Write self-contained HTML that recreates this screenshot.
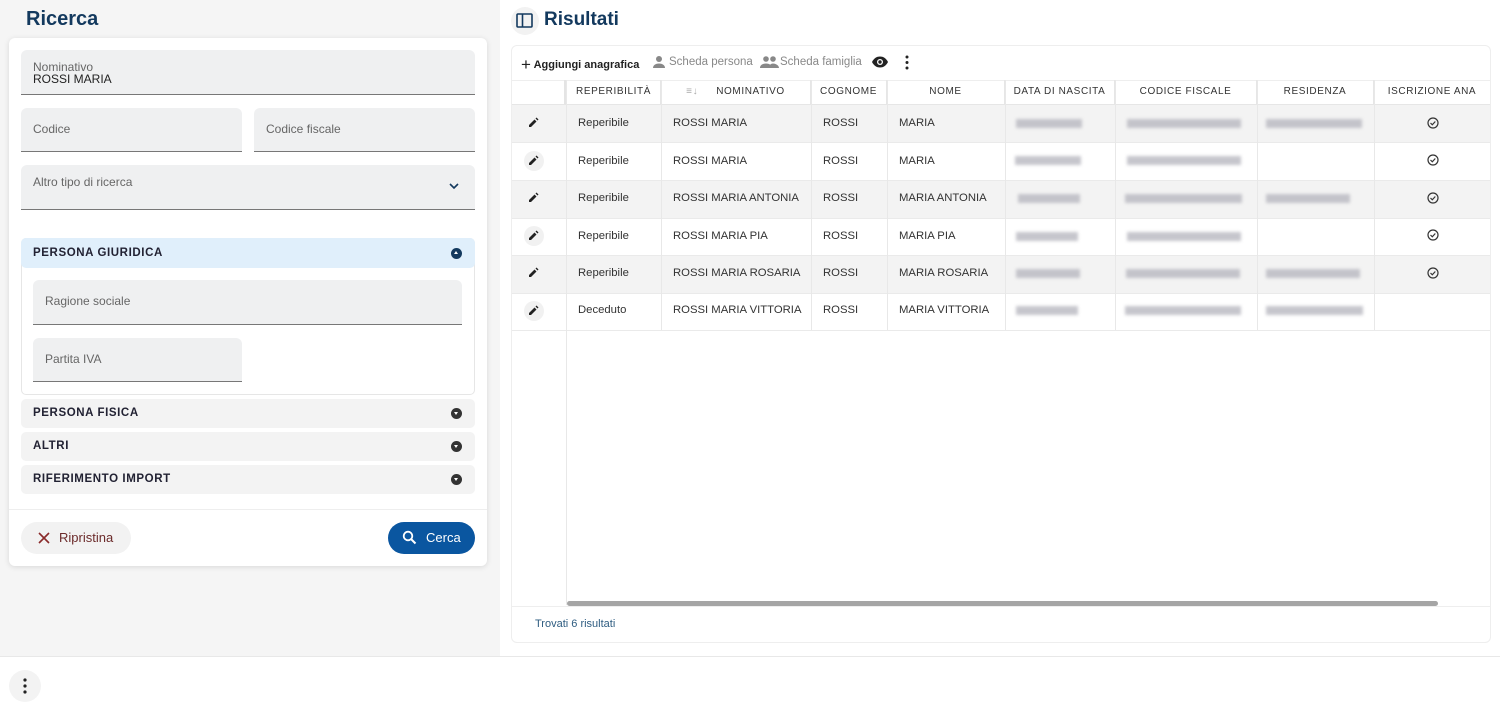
<!DOCTYPE html>
<html><head><meta charset="utf-8"><style>
*{box-sizing:border-box;margin:0;padding:0}
body{width:1500px;height:711px;font-family:"Liberation Sans",sans-serif;background:#fff;position:relative;overflow:hidden;color:#222}
.abs{position:absolute}
.left{left:0;top:0;width:500px;height:656px;background:#f5f5f5}
.card{left:9px;top:38px;width:478px;height:528px;background:#fff;border-radius:6px;box-shadow:0 1px 6px rgba(0,0,0,.12)}
.field{position:absolute;background:#eff0f1;border-radius:6px 6px 0 0;border-bottom:1px solid #777}
.field span{position:absolute;left:12px;font-size:12px;color:#666}
.acc{position:absolute;left:21px;width:454px;height:29px;background:#f3f3f3;border-radius:5px;font-size:11.5px;font-weight:bold;letter-spacing:.6px;color:#223;padding:8px 12px}
.dot{position:absolute;right:13px;top:9px;width:11px;height:11px;border-radius:50%;background:#333}
.dot:after{content:"";position:absolute;left:3px;top:4px;border-left:2.5px solid transparent;border-right:2.5px solid transparent;border-top:3px solid #fff}
.dot.up:after{border-top:none;border-bottom:3px solid #fff;top:3px}
.tcard{left:511px;top:45px;width:980px;height:598px;border:1px solid #eee;border-radius:6px;background:#fff}
.th{position:absolute;top:80px;height:25px;font-size:10px;letter-spacing:.6px;color:#333;text-align:center;line-height:24px;border-right:1px solid #e6e6e6;border-bottom:1px solid #e6e6e6}
.row{position:absolute;left:512px;width:978px;height:38px;border-bottom:1px solid #eaeaea}
.cell{position:absolute;font-size:11.3px;color:#333;line-height:37px}
.blur{position:absolute;height:9px;background:#b8b8c0;filter:blur(1.5px);opacity:.8}
.vl{position:absolute;top:80px;width:1px;height:250px;background:#e8e8e8}
</style></head><body>
<div class="abs left"></div>
<div class="abs" style="left:26px;top:8px;font-size:20px;color:#13395e;font-weight:bold">Ricerca</div>
<div class="abs card"></div>
<div class="field" style="left:21px;top:50px;width:454px;height:45px"><span style="top:10px">Nominativo</span><span style="top:22px;color:#222">ROSSI MARIA</span></div>
<div class="field" style="left:21px;top:108px;width:221px;height:44px"><span style="top:14px">Codice</span></div>
<div class="field" style="left:254px;top:108px;width:221px;height:44px"><span style="top:14px">Codice fiscale</span></div>
<div class="field" style="left:21px;top:165px;width:454px;height:45px"><span style="top:10px">Altro tipo di ricerca</span>
<svg style="position:absolute;right:15px;top:16px" width="12" height="10" viewBox="0 0 12 10"><path d="M2 3l4 4 4-4" stroke="#13395e" stroke-width="1.6" fill="none"/></svg></div>
<div class="abs" style="left:21px;top:238px;width:454px;height:157px;border:1px solid #e6e6e6;border-radius:5px"></div>
<div class="acc" style="top:238px;height:30px;background:#e0effb;padding-top:9px">PERSONA GIURIDICA<div class="dot up" style="background:#13395e;top:10px"></div></div>
<div class="field" style="left:33px;top:280px;width:429px;height:45px"><span style="top:14px">Ragione sociale</span></div>
<div class="field" style="left:33px;top:338px;width:209px;height:44px"><span style="top:14px">Partita IVA</span></div>
<div class="acc" style="top:399px">PERSONA FISICA<div class="dot"></div></div>
<div class="acc" style="top:432px">ALTRI<div class="dot"></div></div>
<div class="acc" style="top:465px">RIFERIMENTO IMPORT<div class="dot"></div></div>
<div class="abs" style="left:9px;top:509px;width:478px;height:1px;background:#eee"></div>
<div class="abs" style="left:21px;top:522px;width:110px;height:32px;border-radius:16px;background:#f2f2f2;font-size:13px;color:#6b2a2a;padding:8px 0 0 38px">Ripristina</div>
<svg class="abs" style="left:37px;top:531px" width="14" height="14" viewBox="0 0 14 14"><path d="M2 2l10 10M12 2L2 12" stroke="#8a2a2a" stroke-width="1.6"/></svg>
<div class="abs" style="left:388px;top:522px;width:87px;height:32px;border-radius:16px;background:#0a56a0;color:#fff;font-size:13px;padding:8px 0 0 38px">Cerca</div>
<svg class="abs" style="left:402px;top:530px" width="15" height="15" viewBox="0 0 15 15"><circle cx="6" cy="6" r="4.3" stroke="#fff" stroke-width="1.8" fill="none"/><path d="M9 9l4.5 4.5" stroke="#fff" stroke-width="2"/></svg>
<div class="abs" style="left:0;top:656px;width:1500px;height:1px;background:#e8e8e8"></div>
<div class="abs" style="left:9px;top:670px;width:32px;height:32px;border-radius:50%;background:#f3f3f3"></div>
<svg class="abs" style="left:23px;top:678px" width="4" height="16"><circle cx="2" cy="2" r="1.6" fill="#222"/><circle cx="2" cy="8" r="1.6" fill="#222"/><circle cx="2" cy="14" r="1.6" fill="#222"/></svg>

<div class="abs" style="left:511px;top:7px;width:28px;height:28px;border-radius:50%;background:#f2f2f2"></div>
<svg class="abs" style="left:516px;top:13px" width="17" height="15" viewBox="0 0 17 15"><rect x="1" y="1" width="15" height="13" rx="1" stroke="#13395e" stroke-width="1.6" fill="none"/><path d="M6.5 1v13" stroke="#13395e" stroke-width="1.6"/></svg>
<div class="abs" style="left:544px;top:9px;font-size:19px;color:#13395e;font-weight:bold">Risultati</div>
<div class="abs tcard"></div>
<div class="abs" style="left:521px;top:55px;font-size:11px;color:#222;font-weight:bold"><span style="font-size:17px;font-weight:normal;vertical-align:-2px">+</span> Aggiungi anagrafica</div>
<svg class="abs" style="left:652px;top:55px" width="14" height="14" viewBox="0 0 14 14"><circle cx="7" cy="4" r="3" fill="#888"/><path d="M1 13c0-3 3-4.5 6-4.5s6 1.5 6 4.5z" fill="#888"/></svg>
<div class="abs" style="left:669px;top:56px;font-size:11.5px;color:#888">Scheda persona</div>
<svg class="abs" style="left:760px;top:55px" width="19" height="14" viewBox="0 0 19 14"><circle cx="6" cy="4" r="2.8" fill="#888"/><circle cx="13" cy="4" r="2.8" fill="#888"/><path d="M0 13c0-3 3-4.5 6-4.5s6 1.5 6 4.5zM9 13c0-3 2-4.5 4-4.5s6 1.5 6 4.5z" fill="#888"/></svg>
<div class="abs" style="left:780px;top:56px;font-size:11.5px;color:#888">Scheda famiglia</div>
<svg class="abs" style="left:871px;top:56px" width="18" height="12" viewBox="0 0 18 12"><path d="M1 6c2-4 5-5.5 8-5.5s6 1.5 8 5.5c-2 4-5 5.5-8 5.5S3 10 1 6z" fill="#222"/><circle cx="9" cy="6" r="3" fill="#fff"/><circle cx="9" cy="6" r="1.7" fill="#222"/></svg>
<svg class="abs" style="left:905px;top:55px" width="4" height="15"><circle cx="2" cy="2" r="1.5" fill="#222"/><circle cx="2" cy="7.5" r="1.5" fill="#222"/><circle cx="2" cy="13" r="1.5" fill="#222"/></svg>
<div class="abs" style="left:512px;top:80px;width:978px;height:1px;background:#eee"></div>

<div class="row" style="top:105px;background:#f3f3f3"></div>
<div class="row" style="top:143px"></div>
<div class="row" style="top:181px;background:#f3f3f3"></div>
<div class="row" style="top:218px"></div>
<div class="row" style="top:256px;background:#f3f3f3"></div>
<div class="row" style="top:293px"></div>

<div class="th" style="left:512px;width:55px;border-right:3px solid #e4e4e4"></div>
<div class="th" style="left:567px;width:94px">REPERIBILITÀ</div>
<div class="th" style="left:661px;width:150px"><span style="color:#aaa;margin-right:18px">≡↓</span>NOMINATIVO</div>
<div class="th" style="left:811px;width:76px">COGNOME</div>
<div class="th" style="left:887px;width:118px">NOME</div>
<div class="th" style="left:1005px;width:110px">DATA DI NASCITA</div>
<div class="th" style="left:1115px;width:142px">CODICE FISCALE</div>
<div class="th" style="left:1257px;width:117px">RESIDENZA</div>
<div class="th" style="left:1374px;width:116px;border-right:none">ISCRIZIONE ANA</div>
<div class="vl" style="left:566px;height:525px;top:80px"></div>
<div class="vl" style="left:661px"></div><div class="vl" style="left:811px"></div><div class="vl" style="left:887px"></div><div class="vl" style="left:1005px"></div><div class="vl" style="left:1115px"></div><div class="vl" style="left:1257px"></div><div class="vl" style="left:1374px"></div>

<div class="abs" style="left:567px;top:601px;width:871px;height:5px;border-radius:3px;background:#a5a5a5"></div>
<div class="abs" style="left:512px;top:606px;width:978px;height:1px;background:#eee"></div>
<div class="abs" style="left:535px;top:618px;font-size:11px;color:#2e5c80">Trovati 6 risultati</div>

<div class="cell" style="left:578px;top:105px">Reperibile</div><div class="cell" style="left:673px;top:105px">ROSSI MARIA</div><div class="cell" style="left:823px;top:105px">ROSSI</div><div class="cell" style="left:899px;top:105px">MARIA</div>
<div class="cell" style="left:578px;top:143px">Reperibile</div><div class="cell" style="left:673px;top:143px">ROSSI MARIA</div><div class="cell" style="left:823px;top:143px">ROSSI</div><div class="cell" style="left:899px;top:143px">MARIA</div>
<div class="cell" style="left:578px;top:180px">Reperibile</div><div class="cell" style="left:673px;top:180px">ROSSI MARIA ANTONIA</div><div class="cell" style="left:823px;top:180px">ROSSI</div><div class="cell" style="left:899px;top:180px">MARIA ANTONIA</div>
<div class="cell" style="left:578px;top:218px">Reperibile</div><div class="cell" style="left:673px;top:218px">ROSSI MARIA PIA</div><div class="cell" style="left:823px;top:218px">ROSSI</div><div class="cell" style="left:899px;top:218px">MARIA PIA</div>
<div class="cell" style="left:578px;top:255px">Reperibile</div><div class="cell" style="left:673px;top:255px">ROSSI MARIA ROSARIA</div><div class="cell" style="left:823px;top:255px">ROSSI</div><div class="cell" style="left:899px;top:255px">MARIA ROSARIA</div>
<div class="cell" style="left:578px;top:292px">Deceduto</div><div class="cell" style="left:673px;top:292px">ROSSI MARIA VITTORIA</div><div class="cell" style="left:823px;top:292px">ROSSI</div><div class="cell" style="left:899px;top:292px">MARIA VITTORIA</div>

<div class="blur" style="left:1016px;top:119px;width:66px"></div><div class="blur" style="left:1127px;top:119px;width:114px"></div><div class="blur" style="left:1266px;top:119px;width:96px"></div>
<div class="blur" style="left:1015px;top:156px;width:66px"></div><div class="blur" style="left:1127px;top:156px;width:114px"></div>
<div class="blur" style="left:1018px;top:194px;width:62px"></div><div class="blur" style="left:1125px;top:194px;width:117px"></div><div class="blur" style="left:1266px;top:194px;width:84px"></div>
<div class="blur" style="left:1016px;top:232px;width:62px"></div><div class="blur" style="left:1127px;top:232px;width:114px"></div>
<div class="blur" style="left:1016px;top:269px;width:64px"></div><div class="blur" style="left:1126px;top:269px;width:114px"></div><div class="blur" style="left:1266px;top:269px;width:94px"></div>
<div class="blur" style="left:1016px;top:306px;width:62px"></div><div class="blur" style="left:1125px;top:306px;width:116px"></div><div class="blur" style="left:1266px;top:306px;width:97px"></div>

<svg class="abs" style="left:0;top:0" width="1500" height="711">
<defs><g id="pen"><path d="M-4 4l0-2 5.5-5.5 2 2L-2 4z M2.5-4.5l1-1 2 2-1 1z" fill="#222"/></g>
<g id="chk"><circle r="5" stroke="#333" stroke-width="1.2" fill="none"/><path d="M-2.5 0l1.8 1.8 3-3.3" stroke="#333" stroke-width="1.2" fill="none"/></g></defs>
<circle cx="534" cy="161" r="10" fill="#f1f1f1"/><circle cx="534" cy="236" r="10" fill="#f1f1f1"/><circle cx="534" cy="311" r="10" fill="#f1f1f1"/>
<use href="#pen" x="533" y="123"/><use href="#pen" x="533" y="161"/><use href="#pen" x="533" y="198"/><use href="#pen" x="533" y="236"/><use href="#pen" x="533" y="273"/><use href="#pen" x="533" y="311"/>
<use href="#chk" x="1433" y="123"/><use href="#chk" x="1433" y="160"/><use href="#chk" x="1433" y="198"/><use href="#chk" x="1433" y="235"/><use href="#chk" x="1433" y="273"/>
</svg>
</body></html>
